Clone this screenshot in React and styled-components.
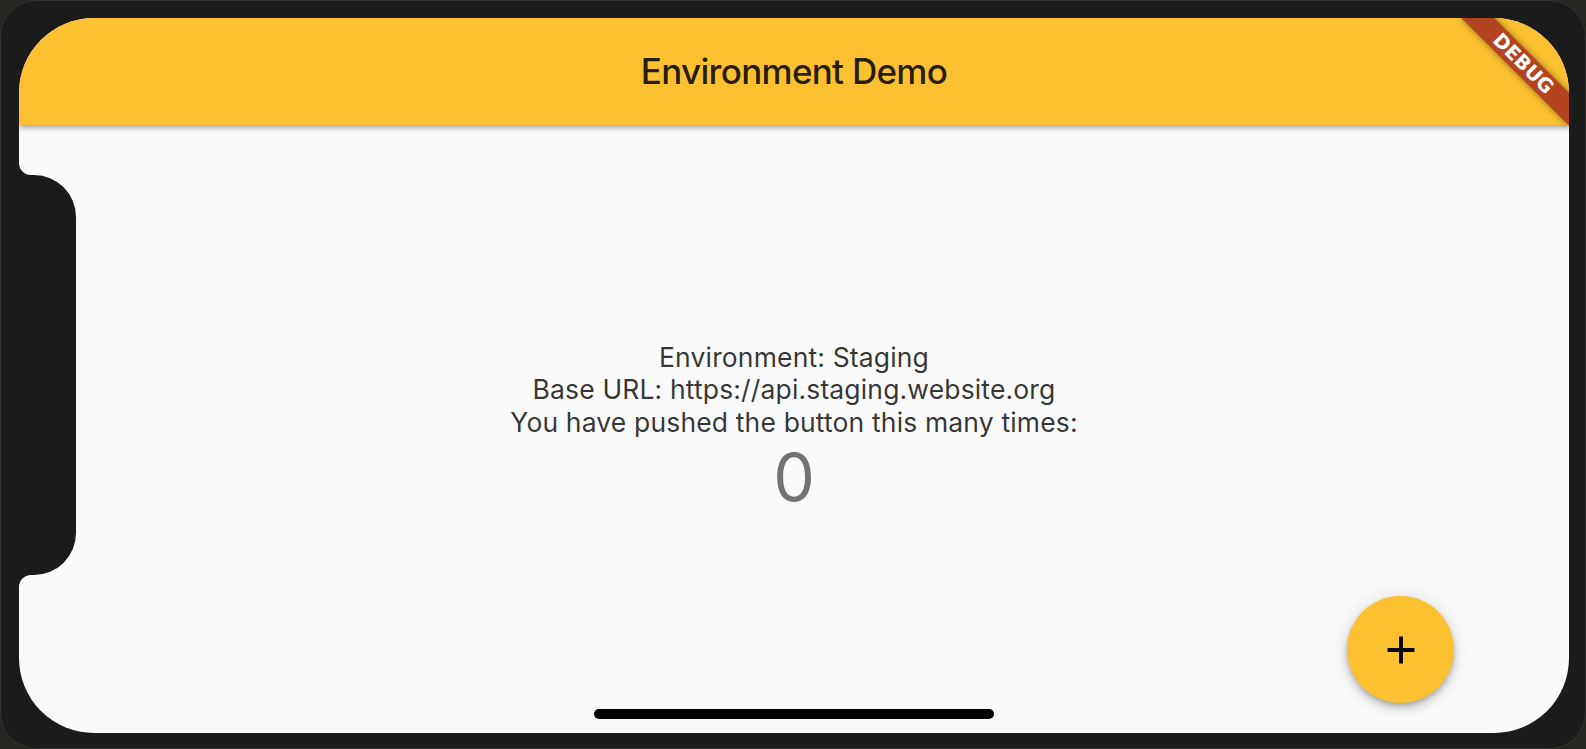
import React from "react";
import styled, { createGlobalStyle } from "styled-components";

const Global = createGlobalStyle`
  html, body { margin: 0; padding: 0; background: #252521; }
  body { font-family: Inter, "Noto Sans", sans-serif; overflow: hidden; }
  * { box-sizing: border-box; }
`;

const Device = styled.div`
  width: 100vw;
  height: 100vh;
  background: #1b1b1b;
  border-radius: 36px;
  box-shadow: inset 0 0 0 1px rgba(255, 255, 255, 0.1);
  padding: 18px 17px 16px 19px;
  display: flex;
`;

const Screen = styled.div`
  position: relative;
  flex: 1;
  overflow: hidden;
  border-radius: 75px;
  background: #fafafa;
  display: flex;
  flex-direction: column;
`;

const AppBar = styled.header`
  position: relative;
  z-index: 2;
  height: 107px;
  flex: none;
  background: #fdc030;
  box-shadow: 0 2px 4px -1px rgba(0, 0, 0, 0.2), 0 4px 5px 0 rgba(0, 0, 0, 0.14),
    0 1px 10px 0 rgba(0, 0, 0, 0.12);
  display: flex;
  align-items: center;
  justify-content: center;
`;

const Title = styled.h1`
  margin: 0;
  font-family: Inter, "Noto Sans", sans-serif;
  font-weight: 500;
  font-size: 35px;
  letter-spacing: -0.7px;
  color: rgba(0, 0, 0, 0.87);
  padding-bottom: 2px;
`;

const Body = styled.main`
  flex: 1;
  display: flex;
  flex-direction: column;
  align-items: center;
  justify-content: center;
  padding-bottom: 1px;
`;

const Line = styled.div`
  font-family: Inter, "Noto Sans", sans-serif;
  font-size: 26.5px;
  line-height: 32.4px;
  letter-spacing: 0.15px;
  color: rgba(0, 0, 0, 0.8);
`;

const Counter = styled.div`
  font-family: Inter, "Noto Sans", sans-serif;
  font-size: 66px;
  line-height: 78px;
  font-weight: 400;
  color: rgba(0, 0, 0, 0.54);
`;

const Notch = styled.svg`
  position: absolute;
  left: 0;
  top: 0;
  z-index: 3;
`;

const Fab = styled.button`
  position: absolute;
  right: 115px;
  bottom: 30px;
  width: 107px;
  height: 107px;
  border-radius: 50%;
  border: none;
  background: #fdc030;
  display: flex;
  align-items: center;
  justify-content: center;
  box-shadow: 0 3px 5px -1px rgba(0, 0, 0, 0.2), 0 6px 10px 0 rgba(0, 0, 0, 0.14),
    0 1px 18px 0 rgba(0, 0, 0, 0.12);
  padding: 0;
  cursor: pointer;
`;

const HomeIndicator = styled.div`
  position: absolute;
  left: 50%;
  bottom: 14px;
  width: 400px;
  height: 10px;
  margin-left: -200px;
  border-radius: 5px;
  background: #000;
  z-index: 4;
`;

const BannerAnchor = styled.div`
  position: absolute;
  top: 0;
  right: 0;
  width: 0;
  height: 0;
  z-index: 5;
  transform: rotate(45deg);
  transform-origin: 0 0;
`;

const Banner = styled.div`
  position: absolute;
  left: -76px;
  top: 53px;
  width: 152px;
  height: 23px;
  background: #b3441f;
  box-shadow: 0 0 6px rgba(0, 0, 0, 0.5);
  display: flex;
  align-items: center;
  justify-content: center;
  color: #fff;
  font-family: "DejaVu Sans", "Liberation Sans", sans-serif;
  font-weight: 700;
  font-size: 19.5px;
  line-height: 1;
`;

export default function App() {
  const T = 157;
  const B = 557;
  const D = 57;
  const r1 = 12;
  const r2 = 42;
  const d = `M-2,${T - r1 - 2} L0,${T - r1} A${r1} ${r1} 0 0 0 ${r1},${T} L${D - r2},${T} A${r2} ${r2} 0 0 1 ${D},${T + r2} L${D},${B - r2} A${r2} ${r2} 0 0 1 ${D - r2},${B} L${r1},${B} A${r1} ${r1} 0 0 0 0,${B + r1} L-2,${B + r1 + 2} Z`;
  return (
    <>
      <Global />
      <Device>
        <Screen>
          <AppBar>
            <Title>Environment Demo</Title>
          </AppBar>
          <Body>
            <Line>Environment: Staging</Line>
            <Line>Base URL: https://api.staging.website.org</Line>
            <Line>You have pushed the button this many times:</Line>
            <Counter>0</Counter>
          </Body>
          <Notch width="60" height="600" viewBox="0 0 60 600">
            <path d={d} fill="#1b1b1b" />
          </Notch>
          <Fab aria-label="Increment">
            <svg width="46" height="46" viewBox="0 0 24 24">
              <path d="M19 13h-6v6h-2v-6H5v-2h6V5h2v6h6v2z" fill="#000" />
            </svg>
          </Fab>
          <HomeIndicator />
          <BannerAnchor>
            <Banner>DEBUG</Banner>
          </BannerAnchor>
        </Screen>
      </Device>
    </>
  );
}
